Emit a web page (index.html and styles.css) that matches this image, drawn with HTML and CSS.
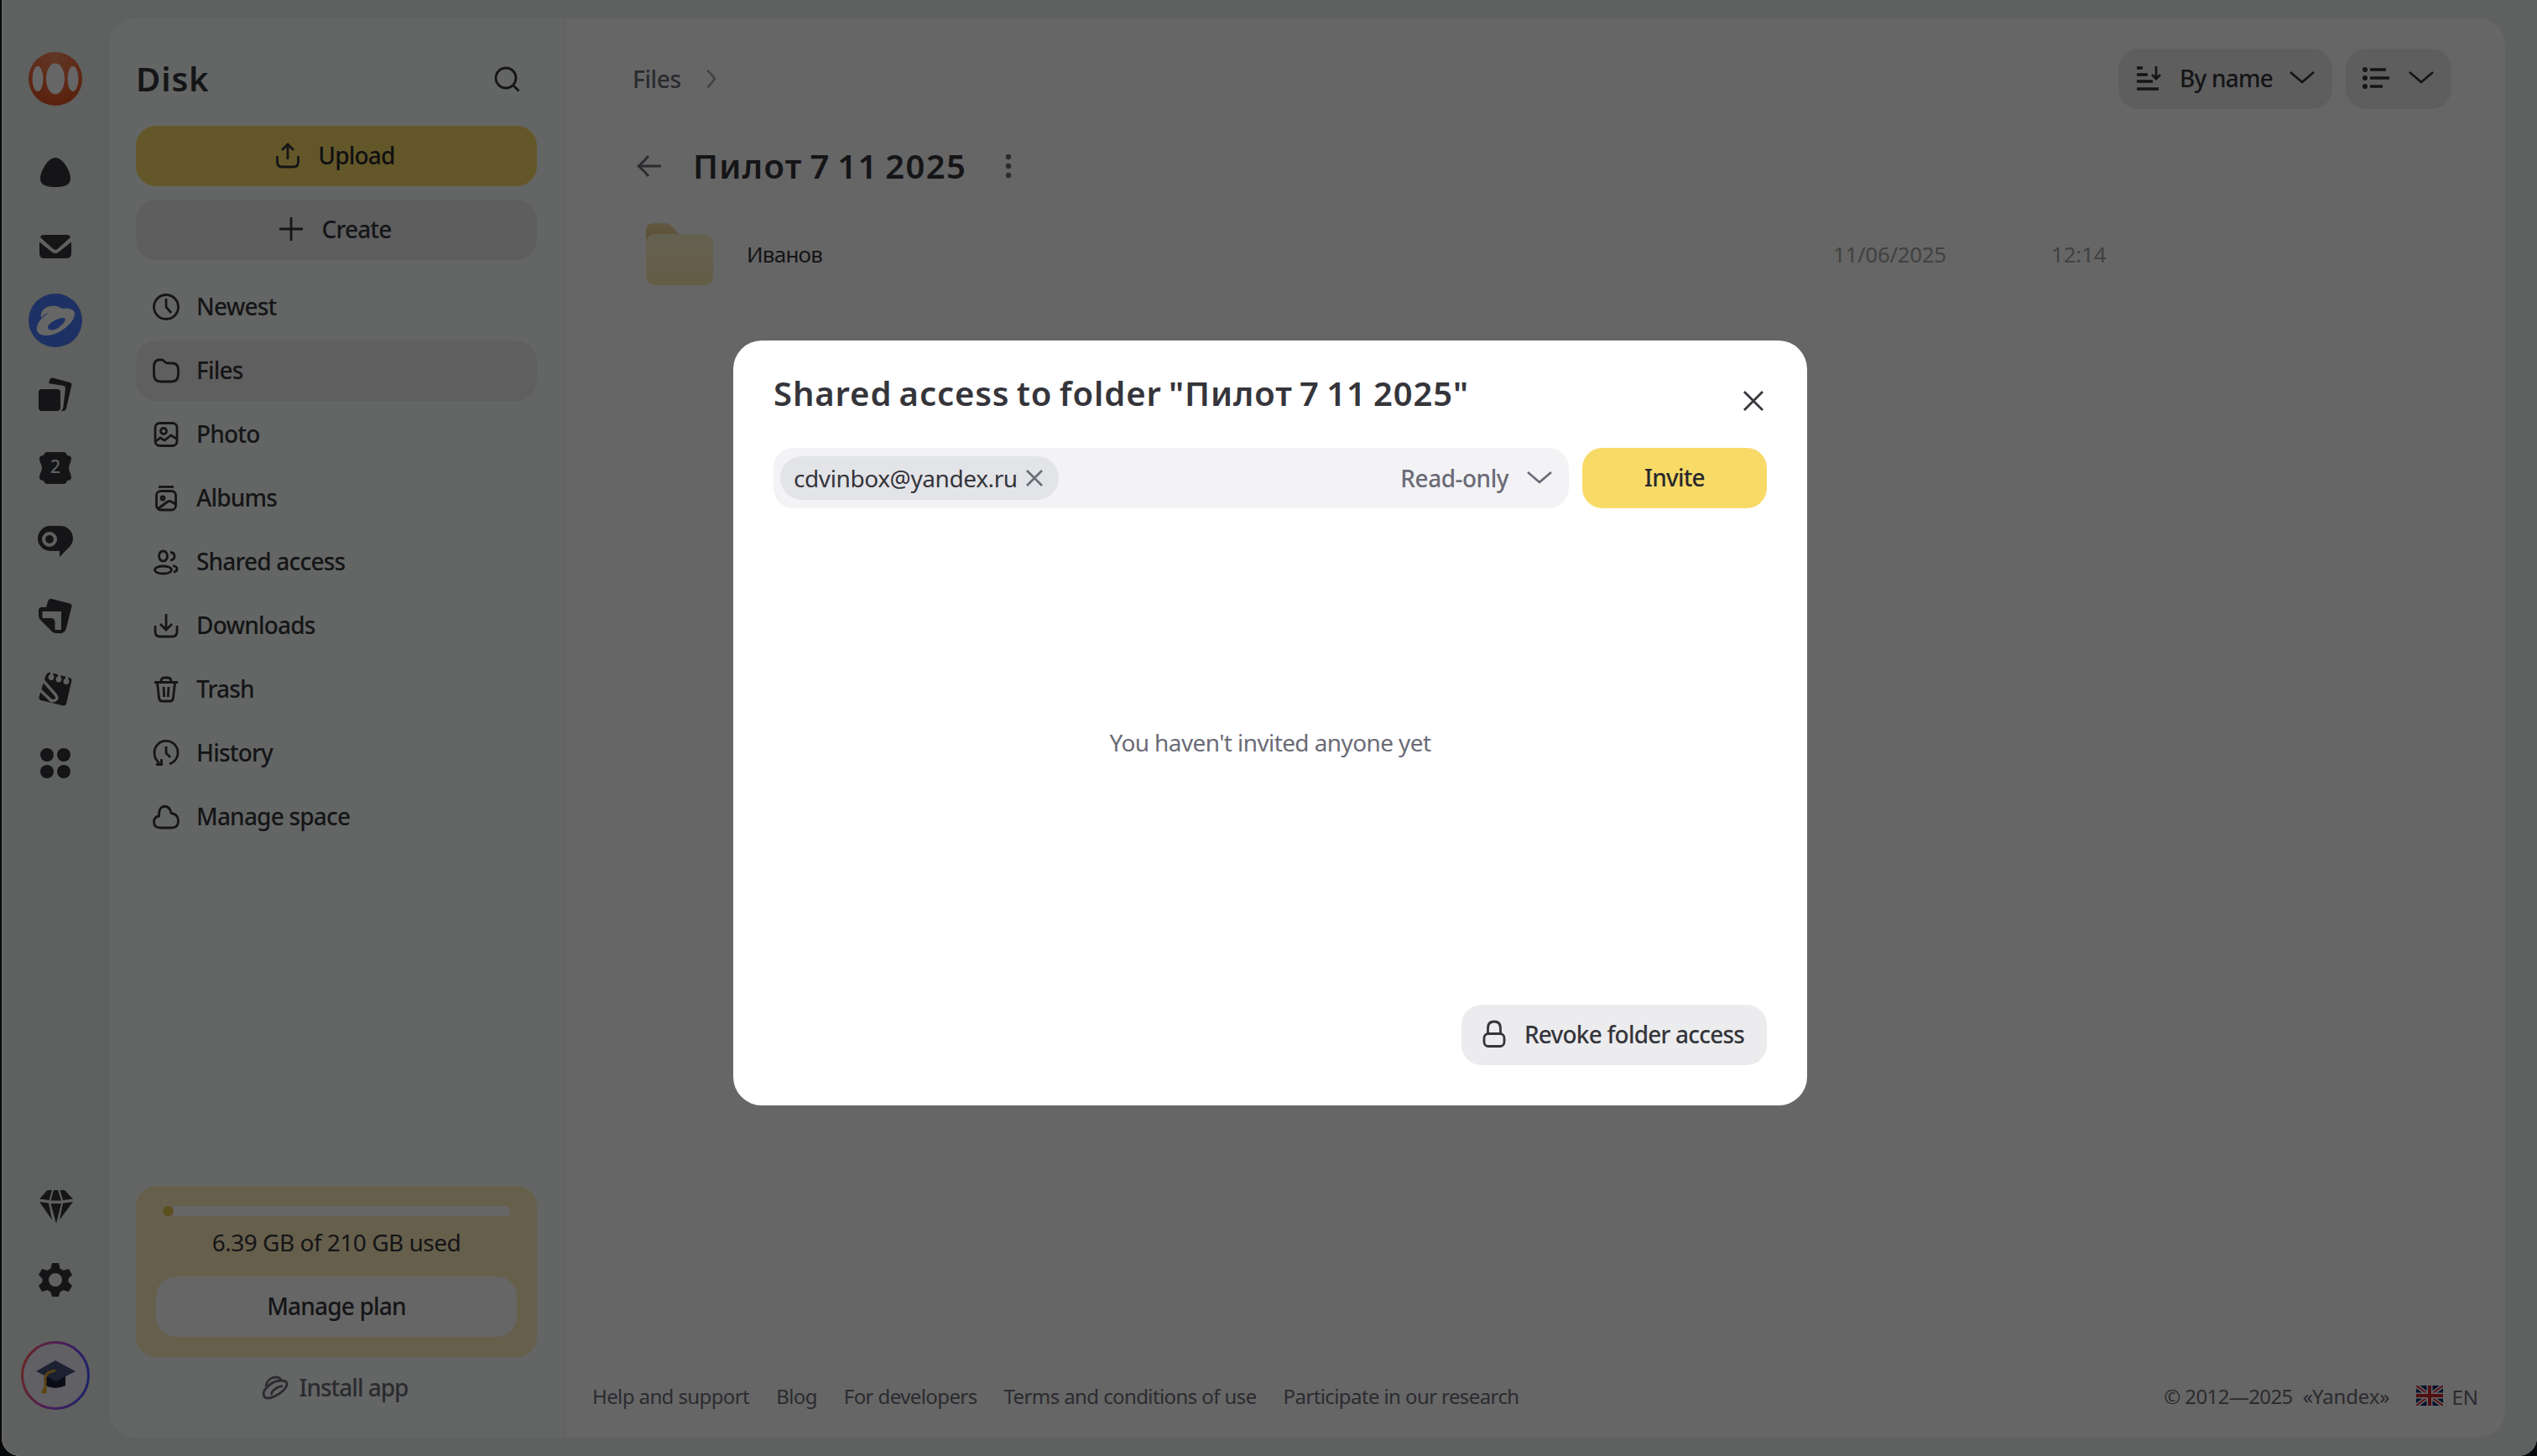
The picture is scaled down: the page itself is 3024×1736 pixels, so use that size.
FILE: index.html
```html
<!DOCTYPE html>
<html lang="en">
<head>
    <meta charset="utf-8">
    <title>Disk</title>
    <link rel="stylesheet" href="styles.css">
</head>
<body>
    <div class="window">
        <nav class="rail">
            <a class="logo">
                <svg width="64" height="64" viewBox="0 0 64 64">
                    <defs>
                        <radialGradient id="logoFill" cx="0.5" cy="0.1" r="0.9">
                            <stop offset="0" stop-color="#f08a60"/>
                            <stop offset="0.5" stop-color="#ec6a3c"/>
                            <stop offset="1" stop-color="#de5424"/>
                        </radialGradient>
                    </defs>
                    <circle cx="32" cy="32" r="32" fill="url(#logoFill)"/>
                    <ellipse cx="32" cy="32" rx="11" ry="18.500" fill="#fff"/>
                    <ellipse cx="11" cy="32" rx="6.500" ry="15" fill="#fff"/>
                    <ellipse cx="53" cy="32" rx="6.500" ry="15" fill="#fff"/>
                </svg>
            </a>
            <div class="rail-list">
                <a class="rail-item">
                    <svg width="48" height="48" viewBox="0 0 48 48"><path d="M24 6c9 0 18 16 18 25 0 8-8 10-18 10S6 39 6 31C6 22 15 6 24 6z"/></svg>
                </a>
                <a class="rail-item">
                    <svg width="48" height="48" viewBox="0 0 48 48"><path d="M6 13a4 4 0 0 1 4-3h28a4 4 0 0 1 4 3L27 26.500q-3 2.500-6 0zM5 18.500l15 12q4 3 8 0l15-12V32q0 6-6 6H11q-6 0-6-6z"/></svg>
                </a>
                <a class="rail-item">
                    <svg width="64" height="64" viewBox="0 0 64 64">
                        <circle cx="32" cy="32" r="32" fill="#4b7cfa"/>
                        <path d="M15 29c-2-9 7-16 18-14 3 .500 5 2 7 3 7-1 15 0 15 6 0 12-20 26-34 26-8 0-12-4-11-10 1-6 6-12 14-17-4 1-7 3-9 6z" fill="#fff"/>
                        <path d="M23 40c0-5 14-12 19-11 6 2-5 12-11 14-4 1-8 1-8-3z" fill="#4b7cfa"/>
                    </svg>
                </a>
                <a class="rail-item">
                    <svg width="48" height="48" viewBox="0 0 48 48"><rect x="4" y="18" width="26" height="26" rx="4"/><path d="M16 11l1.500-5q1-2 3.500-1.500L41 10q3 .8 2.300 3.500L37 41q-1 3-4 3h-2q2-2 2.500-5L36 17q.3-2.500-2-3z"/></svg>
                </a>
                <a class="rail-item">
                    <svg width="48" height="48" viewBox="0 0 48 48"><path d="M14 5h20q3 0 4 4 5 0 5 4c0 4-3 7-3 11s3 7 3 11q0 4-5 4-1 4-4 4H14q-3 0-4-4-5 0-5-4c0-4 3-7 3-11s-3-7-3-11q0-4 5-4 1-4 4-4z"/><text x="24" y="29.500" class="badge-num">2</text></svg>
                </a>
                <a class="rail-item">
                    <svg width="48" height="48" viewBox="0 0 48 48"><path d="M18 5h12a15 15 0 0 1 15 15c0 7-5 11-9 15l-7 7v-7H18a15 15 0 0 1 0-30z"/><circle cx="17" cy="21" r="7" fill="none" stroke="#ebf2ee" stroke-width="4"/></svg>
                </a>
                <a class="rail-item">
                    <svg width="48" height="48" viewBox="0 0 48 48"><path d="M13 14l2.500-8q1-2.500 4-2L41 9.500q3 .8 2.500 3.500L37 39q-2 6-7 6h-5q-3 0-5-2L6 29q-2-2-2-5v-6q0-4 4-4z"/><path d="M8.500 19H31v22h-7.500V32q0-5-5-5h-10z" fill="#ebf2ee"/></svg>
                </a>
                <a class="rail-item">
                    <svg width="48" height="48" viewBox="0 0 48 48">
                        <path d="M19 4l22 6q3 1 2.300 4L37 41q-1 3-4 2.300L7 37q-3-1-2.500-4L12 9q2-6 7-5z"/>
                        <path d="M5 19L10 14l14 16q4 5-.5 7t-7-2L3 22" fill="none" stroke="#ebf2ee" stroke-width="3.500"/>
                        <g fill="#ebf2ee"><circle cx="19" cy="9.500" r="3.400"/><circle cx="28" cy="12" r="3.400"/><circle cx="37" cy="14.500" r="3.400"/><path d="M18 2h4l-1 6h-3zM27 4h4l-1 7h-3zM36 6.500h4l-1 7h-3z"/></g>
                    </svg>
                </a>
                <a class="rail-item">
                    <svg width="48" height="48" viewBox="0 0 48 48"><circle cx="14" cy="14" r="8"/><circle cx="34" cy="14" r="8"/><circle cx="14" cy="34" r="8"/><circle cx="34" cy="34" r="8"/></svg>
                </a>
            </div>
            <div class="rail-list rail-bottom">
                <a class="rail-item">
                    <svg width="48" height="48" viewBox="0 0 48 48"><path d="M14.500 5H20l-3.500 12L5 15.500zM22 5h5l4 12.500H18.500zM29.500 5H35l10 10.500L33 17zM5 19l11 1.500 4 20zM18.500 21h12.500L25 45zM45 19l-12 1.500-4 20z"/></svg>
                </a>
                <a class="rail-item">
                    <svg width="48" height="48" viewBox="0 0 48 48"><path fill-rule="evenodd" d="M20 4h8l1.500 6.500 4 2.300L40 11l4 7-4.500 4.500v4L44 31l-4 7-6.500-1.800-4 2.300L28 44h-8l-1.500-5.500-4-2.300L8 38l-4-7 4.500-4.500v-4L4 18l4-7 6.500 1.800 4-2.300zM24 16a8 8 0 1 0 0 16 8 8 0 0 0 0-16z"/></svg>
                </a>
            </div>
            <a class="avatar">
                <svg width="82" height="82" viewBox="0 0 82 82">
                    <defs>
                        <linearGradient id="ring" x1="0" y1="0.3" x2="1" y2="0.5">
                            <stop offset="0" stop-color="#ff5a5a"/>
                            <stop offset="0.5" stop-color="#c04be0"/>
                            <stop offset="1" stop-color="#4a55ff"/>
                        </linearGradient>
                    </defs>
                    <circle cx="41" cy="41" r="39.500" fill="#f2f0fa" stroke="url(#ring)" stroke-width="3"/>
                    <path d="M29 41v12q12 6 24 0V41z" fill="#1c2236"/>
                    <path d="M41 23l24 13-23 12-24-12z" fill="#46547e"/>
                    <path d="M41 35q-12 2-12 9v10" fill="none" stroke="#dca52c" stroke-width="3"/>
                    <path d="M28 53l3 1-1 9-6-1z" fill="#e5ac2e"/>
                </svg>
            </a>
        </nav>

        <div class="panel">
            <aside class="sidebar">
                <div class="sidebar-head">
                    <h1>Disk</h1>
                    <svg class="line-icon" width="32" height="32" viewBox="0 0 32 32"><circle cx="14" cy="15" r="12"/><path d="M23 24l6.500 6.500"/></svg>
                </div>
                <button class="btn btn-yellow">
                    <svg class="line-icon" width="32" height="32" viewBox="0 0 32 32"><path d="M3.500 17v7q0 6 6 6h13q6 0 6-6v-7M16 21V3M9 10l7-7 7 7"/></svg>
                    <span>Upload</span>
                </button>
                <button class="btn btn-gray">
                    <svg class="line-icon" width="32" height="32" viewBox="0 0 32 32"><path d="M16 2v28M2 16h28"/></svg>
                    <span>Create</span>
                </button>
                <ul class="menu">
                    <li>
                        <svg class="line-icon" width="36" height="36" viewBox="0 0 36 36"><circle cx="18" cy="18" r="14.500"/><path d="M18 8v10l6 7"/></svg>
                        <span>Newest</span>
                    </li>
                    <li class="active">
                        <svg class="line-icon" width="36" height="36" viewBox="0 0 36 36"><path d="M3.500 13q0-8 7-8h2q2 0 3.500 2t4 2h5q7.500 0 7.500 8v5q0 9-8 9h-13q-8 0-8-9z"/></svg>
                        <span>Files</span>
                    </li>
                    <li>
                        <svg class="line-icon" width="36" height="36" viewBox="0 0 36 36"><rect x="5" y="4.500" width="26" height="27" rx="5.500"/><circle cx="15" cy="14" r="3.500"/><path d="M6 26l5-4 5 3 8-6 6 4"/></svg>
                        <span>Photo</span>
                    </li>
                    <li>
                        <svg class="line-icon" width="36" height="36" viewBox="0 0 36 36"><path d="M9 4.500h18"/><rect x="6.500" y="9.500" width="23" height="22.500" rx="5"/><circle cx="14" cy="18" r="2"/><path d="M9 30l11-8q2-1 4 0l5 3"/></svg>
                        <span>Albums</span>
                    </li>
                    <li>
                        <svg class="line-icon" width="36" height="36" viewBox="0 0 36 36"><ellipse cx="14.500" cy="11" rx="5" ry="6"/><ellipse cx="14.500" cy="27.500" rx="10" ry="4.500"/><path d="M23 6.500q5 .5 5 4.700t-5 4.700M26 22.500q5 1 5 4t-4 3.500"/></svg>
                        <span>Shared access</span>
                    </li>
                    <li>
                        <svg class="line-icon" width="36" height="36" viewBox="0 0 36 36"><path d="M5 18v7q0 6 6 6h14q6 0 6-6v-7M18 4v18M11 16l7 7 7-7"/></svg>
                        <span>Downloads</span>
                    </li>
                    <li>
                        <svg class="line-icon" width="36" height="36" viewBox="0 0 36 36"><path d="M4 9.500h28M12 9q0-5 4-5h4q4 0 4 5M7.500 10l2 18q.5 4 4 4h9q3.500 0 4-4l2-18M15 15l.7 12M21 15l-.7 12"/></svg>
                        <span>Trash</span>
                    </li>
                    <li>
                        <svg class="line-icon" width="36" height="36" viewBox="0 0 36 36"><path d="M10 30q-6-5-6-12.500a14 14 0 1 1 18 13.300M6 31.500h6.500V25M18 10v8l5 5"/></svg>
                        <span>History</span>
                    </li>
                    <li>
                        <svg class="line-icon" width="36" height="36" viewBox="0 0 36 36"><path d="M11 31q-7.500 0-7.500-7 0-6 6-7-.5-11.500 7-11.500 6 0 7.500 8 8.500 1.500 8.500 9 0 8.500-8 8.500z"/></svg>
                        <span>Manage space</span>
                    </li>
                </ul>

                <div class="storage">
                    <div class="progress"><div class="progress-fill"></div></div>
                    <p>6.39 GB of 210 GB used</p>
                    <button class="btn btn-white">Manage plan</button>
                </div>
                <a class="install">
                    <svg class="line-icon" width="32" height="32" viewBox="0 0 32 32"><path d="M3 27C-1 20 12 8 23 8c5 0 7 1 7 4C30 20 14 29 7 29q-3 0-4-2zM5 15C6 7 12 4 17 4q5 0 6 4M12 25c-2-4 8-11 13-10"/></svg>
                    <span>Install app</span>
                </a>
            </aside>

            <main class="content">
                <div class="topbar">
                    <div class="crumbs">
                        <span>Files</span>
                        <svg width="14" height="22" viewBox="0 0 14 22"><path d="M2 1q3 2 9 10-6 8-9 10" fill="none" stroke="#a0a0a6" stroke-width="2.500"/></svg>
                    </div>
                    <div class="tools">
                        <button class="btn btn-gray tool-sort">
                            <svg width="32" height="32" viewBox="0 0 32 32" fill="none" stroke="#35353b" stroke-width="3.500"><path d="M1 4h7M1 12h13M1 20h19M1 29h26"/><path d="M24 2v14M19 12l5 5 5-5" stroke-width="2.800"/></svg>
                            <span>By name</span>
                            <svg class="line-icon" width="30" height="18" viewBox="0 0 30 18"><path d="M1 2q7 6 14 12 7-6 14-12"/></svg>
                        </button>
                        <button class="btn btn-gray tool-view">
                            <svg width="32" height="32" viewBox="0 0 32 32" fill="#35353b"><circle cx="3" cy="6" r="3"/><circle cx="3" cy="16" r="3"/><circle cx="3" cy="26" r="3"/><path d="M9 4.300h19v3.400H9zM9 14.300h23v3.400H9zM9 24.300h15v3.400H9z"/></svg>
                            <svg class="line-icon" width="30" height="18" viewBox="0 0 30 18"><path d="M1 2q7 6 14 12 7-6 14-12"/></svg>
                        </button>
                    </div>
                </div>

                <div class="folder-head">
                    <svg width="30" height="28" viewBox="0 0 30 28"><path d="M29 14H2M14 2Q9 8 2 14q7 6 12 12" fill="none" stroke="#6c6c78" stroke-width="2.800"/></svg>
                    <h2>Пилот 7 11 2025</h2>
                    <svg width="8" height="30" viewBox="0 0 8 30" fill="#6c6c78"><circle cx="4" cy="4" r="3.200"/><circle cx="4" cy="15" r="3.200"/><circle cx="4" cy="26" r="3.200"/></svg>
                </div>

                <div class="file-row">
                    <svg width="80" height="74" viewBox="0 0 80 74">
                        <defs>
                            <linearGradient id="folderFront" x1="0" y1="0" x2="0" y2="1">
                                <stop offset="0" stop-color="#fbf3cc"/>
                                <stop offset="0.3" stop-color="#fdeec4"/>
                                <stop offset="1" stop-color="#f8e8ae"/>
                            </linearGradient>
                            <linearGradient id="folderBack" x1="0" y1="0" x2="0" y2="1">
                                <stop offset="0" stop-color="#f3dfa8"/>
                                <stop offset="0.4" stop-color="#e6c888"/>
                            </linearGradient>
                        </defs>
                        <path d="M0 40V10Q0 0 10 0h12q7 0 11 6 5 8 11 8v20z" fill="url(#folderBack)"/>
                        <rect x="0" y="13" width="80" height="61" rx="10" fill="url(#folderFront)"/>
                    </svg>
                    <span class="file-name">Иванов</span>
                    <span class="file-date">11/06/2025</span>
                    <span class="file-time">12:14</span>
                </div>

                <footer class="footer">
                    <a>Help and support</a>
                    <a>Blog</a>
                    <a>For developers</a>
                    <a>Terms and conditions of use</a>
                    <a>Participate in our research</a>
                    <span class="copyright">© 2012—2025</span>
                    <a class="yandex">«Yandex»</a>
                    <svg class="flag" width="32" height="24" viewBox="0 0 32 24">
                        <path d="M0 0h32v24H0z" fill="#0c2a68"/>
                        <path d="M0 0l32 24M32 0L0 24" stroke="#fff" stroke-width="5"/>
                        <path d="M0 0l32 24M32 0L0 24" stroke="#d03040" stroke-width="2"/>
                        <path d="M16 0v24M0 12h32" stroke="#fff" stroke-width="7"/>
                        <path d="M16 0v24M0 12h32" stroke="#c8242f" stroke-width="4"/>
                    </svg>
                    <span class="lang">EN</span>
                </footer>
            </main>
        </div>
    </div>

    <div class="overlay">
        <div class="modal">
            <div class="modal-head">
                <h2>Shared access to folder "Пилот 7 11 2025"</h2>
                <svg class="line-icon" width="32" height="32" viewBox="0 0 32 32"><path d="M5 5l22 22M27 5L5 27"/></svg>
            </div>
            <div class="invite-row">
                <div class="invite-field">
                    <div class="chip">
                        <span>cdvinbox@yandex.ru</span>
                        <svg width="20" height="20" viewBox="0 0 20 20"><path d="M1 1l18 18M19 1L1 19" stroke="#6b6b76" stroke-width="2.600"/></svg>
                    </div>
                    <div class="rights">
                        <span>Read-only</span>
                        <svg width="30" height="18" viewBox="0 0 30 18"><path d="M1 2q7 6 14 12 7-6 14-12" fill="none" stroke="#6b6b76" stroke-width="2.600"/></svg>
                    </div>
                </div>
                <button class="btn btn-yellow btn-invite">Invite</button>
            </div>
            <div class="empty">You haven't invited anyone yet</div>
            <button class="btn btn-gray btn-revoke">
                <svg class="line-icon" width="32" height="34" viewBox="0 0 32 34"><path d="M8.500 16v-6q0-8 7.500-8t7.500 8v6"/><rect x="4" y="16.500" width="24" height="15" rx="5"/></svg>
                <span>Revoke folder access</span>
            </button>
        </div>
    </div>
</body>
</html>
```
FILE: styles.css
```css
* {
    box-sizing: border-box;
}

body {
    margin: 0;
    height: 1736px;
    overflow: hidden;
    background: #08090c;
    font-family: "Noto Sans", "Open Sans", sans-serif;
    font-size: 28px;
    letter-spacing: -0.6px;
    color: #35353b;
}

h1, h2, p, ul {
    margin: 0;
    padding: 0;
}

h1, h2 {
    font-size: 40px;
    font-weight: 600;
    line-height: 46px;
    letter-spacing: 0.9px;
    word-spacing: -3px;
    white-space: nowrap;
}

svg {
    display: block;
    flex: none;
}

.line-icon {
    fill: none;
    stroke: #35353b;
    stroke-width: 2.8;
}

.window {
    display: flex;
    height: 1736px;
    margin-left: 2px;
    padding: 22px 38px 22px 0;
    background: #ebf2ee;
    border-left: 2px solid #fff;
    border-radius: 0 0 22px 22px;
}

/* left rail */
.rail {
    display: flex;
    flex-direction: column;
    align-items: center;
    width: 126px;
    padding-top: 40px;
    padding-right: 2px;
    fill: #35353b;
}

.rail-list {
    margin-top: 36px;
}

.rail-item {
    display: flex;
    align-items: center;
    justify-content: center;
    width: 88px;
    height: 88px;
}

.rail-bottom {
    margin-top: auto;
}

.badge-num {
    font-size: 21px;
    font-weight: 500;
    letter-spacing: 0;
    text-anchor: middle;
    fill: #ebf2ee;
}

.avatar {
    margin: 29px 0 33px;
}

.panel {
    display: flex;
    flex: 1;
    background: #fff;
    border-radius: 32px;
    overflow: hidden;
}

/* sidebar */
.sidebar {
    display: flex;
    flex-direction: column;
    width: 544px;
    padding: 48px 32px 40px;
    background: #fafffc;
    border-right: 2px solid #f0f2f1;
}

.sidebar-head {
    display: flex;
    justify-content: space-between;
    align-items: center;
    height: 48px;
    margin-bottom: 32px;
    padding-right: 19px;
}

.btn {
    display: flex;
    align-items: center;
    justify-content: center;
    gap: 20px;
    height: 72px;
    padding: 0 0 2px;
    border: none;
    border-radius: 24px;
    font-family: inherit;
    font-size: 28px;
    font-weight: 550;
    letter-spacing: -0.8px;
    color: #35353b;
    white-space: nowrap;
}

.btn-yellow {
    background: #f8da67;
    color: #28282c;
}

.btn-gray {
    background: #ececee;
}

.btn-white {
    background: #fff;
}

.sidebar > .btn + .btn {
    margin-top: 16px;
}

.sidebar > .btn svg {
    margin-left: -4px;
}

.menu {
    margin-top: 20px;
    list-style: none;
}

.menu li {
    display: flex;
    align-items: center;
    gap: 18px;
    height: 72px;
    margin-bottom: 4px;
    padding-left: 18px;
    border-radius: 24px;
    font-weight: 550;
    letter-spacing: -0.8px;
}

.menu li span {
    padding-bottom: 2px;
}

.menu li.active {
    background: #f0eeee;
}

.storage {
    height: 204px;
    margin-top: auto;
    padding: 24px;
    background: #ffeebe;
    border-radius: 24px;
}

.progress {
    height: 12px;
    margin: 0 8px;
    background: #fff;
    border-radius: 6px;
}

.progress-fill {
    width: 13px;
    height: 12px;
    background: #e5c64c;
    border-radius: 6px;
}

.storage p {
    margin-bottom: 21px;
    padding-top: 11px;
    line-height: 40px;
    letter-spacing: -0.5px;
    text-align: center;
}

.storage .btn {
    width: 430px;
}

.install {
    display: flex;
    align-items: center;
    justify-content: center;
    gap: 13px;
    height: 40px;
    margin-top: 16px;
    padding-right: 4px;
    font-weight: 550;
    letter-spacing: -1px;
    color: #6c6c78;
}

.install svg {
    stroke: #6c6c78;
}

/* files */
.content {
    display: flex;
    flex-direction: column;
    flex: 1;
    padding: 36px 32px 30px;
}

.topbar {
    display: flex;
    justify-content: space-between;
    padding: 0 32px 0 48px;
}

.crumbs {
    display: flex;
    align-items: center;
    gap: 29px;
    padding-bottom: 1px;
    font-weight: 550;
    letter-spacing: -0.4px;
    color: #6c6c78;
}

.tools {
    display: flex;
    gap: 16px;
}

.tool-sort {
    width: 255px;
}

.tool-view {
    width: 126px;
    gap: 23px;
    padding-right: 2px;
}

.folder-head {
    display: flex;
    align-items: center;
    height: 48px;
    margin-top: 44px;
    padding-left: 53px;
}

.folder-head h2 {
    margin: 0 46px 0 37px;
    letter-spacing: 1.3px;
}

.file-row {
    display: flex;
    align-items: center;
    margin-top: 44px;
    padding-left: 64px;
    font-size: 26px;
}

.file-name {
    width: 1295px;
    margin-left: 40px;
    letter-spacing: -0.8px;
}

.file-date {
    width: 260px;
    letter-spacing: -0.35px;
    color: #a3a3a3;
}

.file-time {
    letter-spacing: -0.2px;
    color: #a3a3a3;
}

.footer {
    display: flex;
    align-items: center;
    gap: 32px;
    height: 40px;
    margin-top: auto;
    font-size: 24px;
    letter-spacing: -0.6px;
    color: #6c6c78;
}

.copyright {
    margin-left: auto;
}

.yandex {
    margin-left: -20px;
    letter-spacing: -0.15px;
}

.lang {
    margin-left: -22px;
    padding-top: 2px;
    letter-spacing: 0;
}

/* share dialog */
.overlay {
    position: fixed;
    top: 0;
    left: 2px;
    right: 0;
    height: 1736px;
    padding: 406px 0 0 872px;
    background: rgba(0, 0, 0, 0.6);
    border-radius: 0 0 22px 22px;
}

.modal {
    display: flex;
    flex-direction: column;
    width: 1280px;
    height: 912px;
    padding: 40px 48px 48px;
    background: #fff;
    border-radius: 34px;
}

.modal-head {
    display: flex;
    justify-content: space-between;
    height: 88px;
}

.modal-head svg {
    margin-top: 16px;
}

.invite-row {
    display: flex;
    gap: 16px;
}

.invite-field {
    display: flex;
    align-items: center;
    justify-content: space-between;
    width: 948px;
    height: 72px;
    padding: 0 20px 0 8px;
    background: #f3f3f6;
    border-radius: 24px;
}

.chip {
    display: flex;
    align-items: center;
    justify-content: space-between;
    width: 332px;
    height: 52px;
    padding: 0 19px 1px 16px;
    background: #e3e4e8;
    border-radius: 26px;
    letter-spacing: -0.4px;
}

.rights {
    display: flex;
    align-items: center;
    gap: 22px;
    font-weight: 550;
    letter-spacing: -0.5px;
    color: #6b6b76;
}

.btn-invite {
    width: 220px;
}

.empty {
    display: flex;
    flex: 1;
    align-items: center;
    justify-content: center;
    padding-bottom: 34px;
    color: #6b6b76;
}

.btn-revoke {
    align-self: flex-end;
    width: 364px;
}

.btn-revoke svg {
    margin-left: -4px;
}
```
